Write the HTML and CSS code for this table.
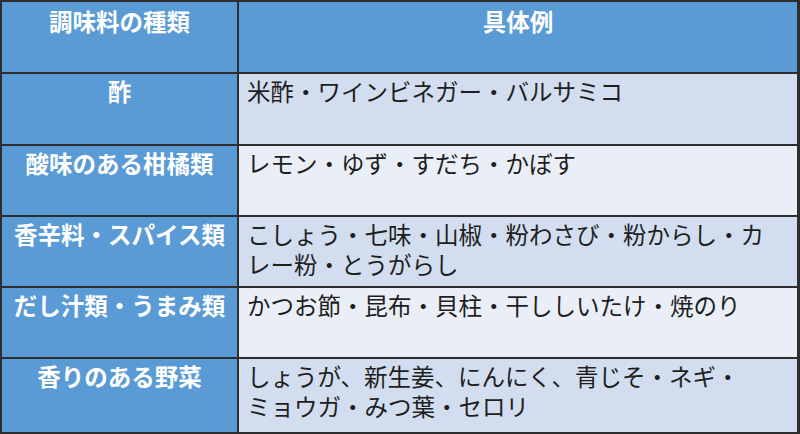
FILE: index.html
```html
<!DOCTYPE html>
<html lang="ja">
<head>
<meta charset="utf-8">
<link rel="stylesheet" href="styles.css">
</head>
<body>
<div class="table">
  <div class="cell head">調味料の種類</div>
  <div class="cell head">具体例</div>

  <div class="cell key">酢</div>
  <div class="cell val odd">米酢・ワインビネガー・バルサミコ</div>

  <div class="cell key">酸味のある柑橘類</div>
  <div class="cell val even">レモン・ゆず・すだち・かぼす</div>

  <div class="cell key">香辛料・スパイス類</div>
  <div class="cell val odd">こしょう・七味・山椒・粉わさび・粉からし・カ<br>レー粉・とうがらし</div>

  <div class="cell key">だし汁類・うまみ類</div>
  <div class="cell val even">かつお節・昆布・貝柱・干ししいたけ・焼のり</div>

  <div class="cell key">香りのある野菜</div>
  <div class="cell val odd">しょうが、新生姜、にんにく、青じそ・ネギ・<br>ミョウガ・みつ葉・セロリ</div>
</div>
</body>
</html>
```

FILE: styles.css
```css
html, body {
  margin: 0;
  padding: 0;
  background: #ffffff;
}

.table {
  box-sizing: border-box;
  width: 800px;
  height: 434px;
  display: grid;
  grid-template-columns: 235px 1fr;
  grid-template-rows: 70px 70px 69px 69px 69px 1fr;
  gap: 2px;
  padding: 2px 3px 2px 2px;
  background: #2e2e2e;
  font-family: "Noto Sans CJK JP", "Noto Sans", sans-serif;
  font-size: 23.5px;
  line-height: 30px;
}

.cell {
  box-sizing: border-box;
  overflow: hidden;
}

.head {
  background: #5b9bd5;
  color: #ffffff;
  font-weight: 700;
  text-align: center;
  padding-top: 4px;
}

.key {
  background: #5b9bd5;
  color: #ffffff;
  font-weight: 700;
  text-align: center;
  padding-top: 2px;
}

.val {
  color: #1e1e1e;
  padding: 2px 0 0 8px;
}

.odd {
  background: #d2deef;
}

.even {
  background: #eaeff7;
}
```
